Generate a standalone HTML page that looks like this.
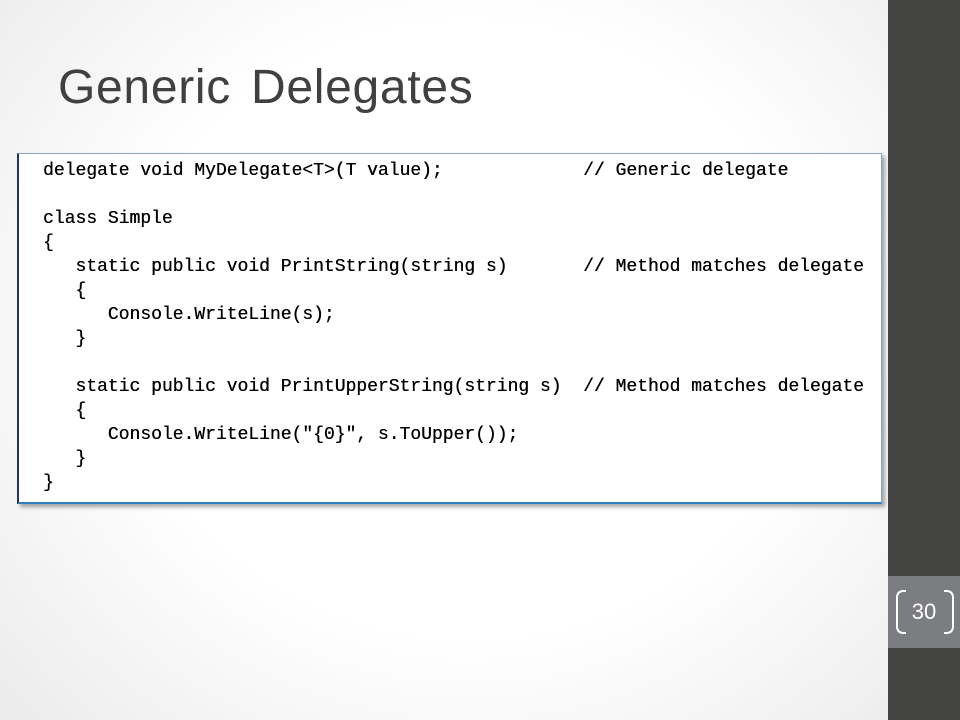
<!DOCTYPE html>
<html><head><meta charset="utf-8"><style>
html,body{margin:0;padding:0}
body{width:960px;height:720px;position:relative;overflow:hidden;background:radial-gradient(ellipse 620px 560px at 470px 330px,#ffffff 55%,#ececec 100%);font-family:"Liberation Sans",sans-serif}
.side{position:absolute;left:888px;top:0;width:72px;height:720px;background:#444442}
.num{position:absolute;left:888px;top:576px;width:72px;height:72px;background:#7c7d80}
.num span{position:absolute;left:0;width:72px;top:23px;text-align:center;color:#fff;font-size:22px}
h1{position:absolute;left:58px;top:60px;margin:0;font-weight:normal;font-size:48px;letter-spacing:0.7px;color:#404040;word-spacing:6px}
.box{position:absolute;left:17px;top:153px;width:862px;height:348px;background:#fff;border-left:2px solid #1f3864;border-top:1px solid #8aa6c8;border-right:1px solid #8aa6c8;border-bottom:2px solid #2f7ec4;box-shadow:3px 3px 4px rgba(0,0,0,.35)}
pre{position:absolute;left:24px;top:5px;margin:0;font-family:"Liberation Mono",monospace;font-size:18px;line-height:24px;color:#000;text-shadow:0.3px 0 0 #000}
</style></head><body>
<h1>Generic Delegates</h1>
<div class="box"><pre>delegate void MyDelegate&lt;T&gt;(T value);             // Generic delegate

class Simple
{
   static public void PrintString(string s)       // Method matches delegate
   {
      Console.WriteLine(s);
   }

   static public void PrintUpperString(string s)  // Method matches delegate
   {
      Console.WriteLine("{0}", s.ToUpper());
   }
}</pre></div>
<div class="side"></div>
<div class="num"><span>30</span>
<div style="position:absolute;left:8px;top:14px;width:8px;height:40px;border:2px solid #fff;border-right:none;border-radius:7px 0 0 7px"></div>
<div style="position:absolute;right:6px;top:14px;width:8px;height:40px;border:2px solid #fff;border-left:none;border-radius:0 7px 7px 0"></div>
</div>
</body></html>
